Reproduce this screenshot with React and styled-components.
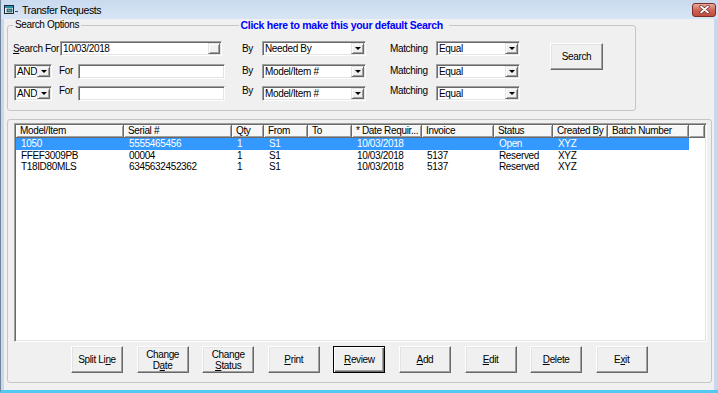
import React from 'react';
import styled, { createGlobalStyle, css } from 'styled-components';

const UI_FONT = `"Liberation Sans", Arial, sans-serif`;

const GlobalStyle = createGlobalStyle`
  body {
    margin: 0;
    background: #fff;
    font-family: ${UI_FONT};
    font-size: 10px;
    letter-spacing: -0.35px;
    color: #000;
  }
`;

const columns = [
  { title: 'Model/Item', w: 108 },
  { title: 'Serial #', w: 108 },
  { title: 'Qty', w: 32 },
  { title: 'From', w: 44 },
  { title: 'To', w: 44 },
  { title: '* Date Requir...', w: 70 },
  { title: 'Invoice', w: 72 },
  { title: 'Status', w: 59 },
  { title: 'Created By', w: 55 },
  { title: 'Batch Number', w: 81 },
];

const rows = [
  ['1050', '5555465456', '1', 'S1', '', '10/03/2018', '', 'Open', 'XYZ', ''],
  ['FFEF3009PB', '00004', '1', 'S1', '', '10/03/2018', '5137', 'Reserved', 'XYZ', ''],
  ['T18ID80MLS', '6345632452362', '1', 'S1', '', '10/03/2018', '5137', 'Reserved', 'XYZ', ''],
];

const Window = styled.div`
  width: 718px;
  height: 393px;
  box-sizing: border-box;
  display: flex;
  flex-direction: column;
  background: #c8d9ee;
  border-left: 1px solid #6f8399;
  border-bottom: 3px solid #52c8f2;
  overflow: hidden;
`;

const TitleBar = styled.div`
  height: 19px;
  flex: none;
  display: flex;
  align-items: center;
  padding: 0 2px 0 3px;
  background: linear-gradient(#c9daef, #d8e5f5);
`;

const TitleText = styled.span`
  flex: 1;
  margin-left: 2px;
  font-size: 10.5px;
  letter-spacing: -0.4px;
  color: #000;
`;

const CloseButton = styled.div`
  width: 24px;
  height: 14px;
  box-sizing: border-box;
  border: 1px solid #7a2e25;
  border-radius: 3px;
  background: linear-gradient(#e8aa9f, #d06656 50%, #c34a3b);
  display: flex;
  align-items: center;
  justify-content: center;
`;

const Client = styled.div`
  flex: 1;
  margin: 0 4px 0 3px;
  background: #f0f0f0;
  display: flex;
  flex-direction: column;
`;

const SearchGroup = styled.fieldset`
  margin: 0 0 0 3px;
  width: 629px;
  box-sizing: border-box;
  padding: 10px 5px 9px 5px;
  border: 1px solid #c6c6c6;
  border-radius: 3px;
  min-width: 0;
`;

const Legend = styled.legend`
  display: flex;
  align-items: center;
  width: 436px;
  padding: 0;
  line-height: 12px;
`;

const Caption = styled.span`
  padding: 0 2px;
  white-space: nowrap;
`;

const Rule = styled.span`
  flex: 1;
  height: 1px;
  background: #c6c6c6;
`;

const DefaultLink = styled.span`
  padding: 0 6px 0 2px;
  font-size: 10.5px;
  letter-spacing: -0.3px;
  font-weight: bold;
  color: #0000ff;
  white-space: nowrap;
  cursor: pointer;
`;

const SearchBody = styled.div`
  display: flex;
  align-items: flex-start;
`;

const Criteria = styled.div`
  display: grid;
  grid-template-columns: 229px 20px 104px 24px 46px 84px;
  grid-auto-rows: 15px;
  row-gap: 7.5px;
  align-items: center;
`;

const Lead = styled.div`
  display: flex;
  align-items: center;
  height: 100%;
`;

const Label = styled.span`
  white-space: nowrap;
  line-height: 12px;
  width: ${p => (p.$w ? `${p.$w}px` : 'auto')};
  margin-left: ${p => p.$ml || 0}px;
  margin-bottom: ${p => (p.$lift ? '5px' : '0')};
  flex: none;
`;

const Key = styled.span`
  text-decoration: underline;
  text-underline-offset: 1px;
`;

const Field = styled.div`
  box-sizing: border-box;
  height: 15px;
  width: ${p => p.$w}px;
  margin-left: ${p => p.$ml || 0}px;
  flex: none;
  padding: 1px;
  background: #fff;
  border: 1px solid;
  border-color: #a0a0a0 #fff #fff #a0a0a0;
  box-shadow: inset 1px 1px #696969, inset -1px -1px #e3e3e3;
  display: flex;
  align-items: stretch;
`;

const Value = styled.span`
  flex: 1;
  padding-left: 1px;
  line-height: 11px;
  white-space: nowrap;
  overflow: hidden;
`;

const raised = css`
  background: #f0f0f0;
  border: 1px solid;
  border-color: #e3e3e3 #696969 #696969 #e3e3e3;
  box-shadow: inset 1px 1px #fff, inset -1px -1px #a0a0a0;
`;

const PickButton = styled.span`
  width: 12px;
  flex: none;
  box-sizing: border-box;
  ${raised};
`;

const DropButton = styled.span`
  width: 13px;
  flex: none;
  box-sizing: border-box;
  ${raised};
  display: flex;
  align-items: center;
  justify-content: center;

  &::after {
    content: '';
    border-left: 3px solid transparent;
    border-right: 3px solid transparent;
    border-top: 3px solid #000;
  }
`;

const Button = styled.button`
  font-family: ${UI_FONT};
  font-size: 10px;
  letter-spacing: -0.35px;
  line-height: 11px;
  color: #000;
  width: ${p => p.$w || 52}px;
  height: 27px;
  padding: 0;
  flex: none;
  box-sizing: border-box;
  background: #f0f0f0;
  border: 1px solid;
  border-color: #fff #696969 #696969 #fff;
  box-shadow: inset -1px -1px #a0a0a0, inset 1px 1px #e3e3e3;
  cursor: pointer;

  ${p =>
    p.$default &&
    css`
      border-color: #000;
      box-shadow: inset 1px 1px #fff, inset -1px -1px #696969, inset -2px -2px #a0a0a0;
    `}
`;

const SearchButton = styled(Button)`
  margin: 2px 0 0 30px;
`;

const ListGroup = styled.div`
  margin: 8px 0 0 3px;
  width: 705px;
  height: 264px;
  box-sizing: border-box;
  border: 1px solid #c6c6c6;
  border-radius: 3px;
  padding: 3px 4px 9px 6px;
  display: flex;
  flex-direction: column;
`;

const ListView = styled.div`
  flex: 1;
  min-height: 0;
  box-sizing: border-box;
  background: #fff;
  border: 1px solid;
  border-color: #a0a0a0 #fff #fff #a0a0a0;
  box-shadow: inset 1px 1px #696969, inset -1px -1px #e3e3e3;
  padding: 1px;
  overflow: hidden;
`;

const HeaderRow = styled.div`
  display: flex;
  height: 13px;
`;

const HeaderCell = styled.div`
  box-sizing: border-box;
  width: ${p => (p.$w ? `${p.$w}px` : 'auto')};
  flex: ${p => (p.$w ? 'none' : '1')};
  padding-left: 4px;
  background: #f7f7f7;
  border-right: 1px solid #696969;
  border-bottom: 1px solid #696969;
  box-shadow: inset 1px 1px #fff, inset -1px -1px #a0a0a0;
  line-height: 12px;
  white-space: nowrap;
  overflow: hidden;
`;

const Row = styled.div`
  display: flex;
  width: max-content;
  height: 11.5px;
  background: ${p => (p.$selected ? '#3399ff' : 'transparent')};
  color: ${p => (p.$selected ? '#fff' : '#000')};
`;

const Cell = styled.div`
  box-sizing: border-box;
  width: ${p => p.$w}px;
  padding-left: 5px;
  line-height: 11.5px;
  white-space: nowrap;
  overflow: hidden;
`;

const ButtonBar = styled.div`
  display: flex;
  gap: 13.6px;
  margin-top: 4px;
  padding-left: 57px;
`;

const TitleIcon = () => (
  <svg width="16" height="12" viewBox="0 0 16 12">
    <rect x="0.5" y="1.5" width="9" height="8" fill="#e6f2f2" stroke="#1c2a36" />
    <rect x="1" y="2" width="8" height="2" fill="#2b8ea8" />
    <rect x="3" y="5" width="5" height="3" fill="#4aa3b4" stroke="#1c2a36" strokeWidth="0.6" />
    <path d="M11 7.5h3" stroke="#2d4a66" strokeWidth="1" />
  </svg>
);

const CloseGlyph = () => (
  <svg width="11" height="9" viewBox="0 0 11 9">
    <path d="M2 1.5 L9 7.5 M9 1.5 L2 7.5" stroke="#6b2c24" strokeWidth="3.2" strokeLinecap="round" />
    <path d="M2 1.5 L9 7.5 M9 1.5 L2 7.5" stroke="#ffffff" strokeWidth="1.7" strokeLinecap="round" />
  </svg>
);

const Combo = ({ value, w, ml }) => (
  <Field $w={w} $ml={ml}>
    <Value>{value}</Value>
    <DropButton />
  </Field>
);

const criteriaRows = [
  { by: 'Needed By' },
  { by: 'Model/Item #' },
  { by: 'Model/Item #', lift: true },
];

export default function App() {
  return (
    <>
      <GlobalStyle />
      <Window>
        <TitleBar>
          <TitleIcon />
          <TitleText>Transfer Requests</TitleText>
          <CloseButton>
            <CloseGlyph />
          </CloseButton>
        </TitleBar>
        <Client>
          <SearchGroup>
            <Legend>
              <Caption>Search Options</Caption>
              <Rule />
              <DefaultLink>Click here to make this your default Search</DefaultLink>
            </Legend>
            <SearchBody>
              <Criteria>
                {criteriaRows.map((r, i) => (
                  <React.Fragment key={i}>
                    {i === 0 ? (
                      <Lead>
                        <Label $w={47}>
                          <Key>S</Key>earch For
                        </Label>
                        <Field $w={162}>
                          <Value>10/03/2018</Value>
                          <PickButton />
                        </Field>
                      </Lead>
                    ) : (
                      <Lead>
                        <Combo value="AND" w={38} ml={1} />
                        <Label $w={19} $ml={7} $lift={r.lift}>
                          For
                        </Label>
                        <Field $w={147} />
                      </Lead>
                    )}
                    <Label $lift={r.lift}>By</Label>
                    <Combo value={r.by} w={104} />
                    <span />
                    <Label $lift={r.lift}>Matching</Label>
                    <Combo value="Equal" w={84} />
                  </React.Fragment>
                ))}
              </Criteria>
              <SearchButton $w={53}>Search</SearchButton>
            </SearchBody>
          </SearchGroup>

          <ListGroup>
            <ListView>
              <HeaderRow>
                {columns.map(c => (
                  <HeaderCell key={c.title} $w={c.w}>
                    {c.title}
                  </HeaderCell>
                ))}
                <HeaderCell />
              </HeaderRow>
              {rows.map((r, i) => (
                <Row key={i} $selected={i === 0}>
                  {r.map((v, j) => (
                    <Cell key={j} $w={columns[j].w}>
                      {v}
                    </Cell>
                  ))}
                </Row>
              ))}
            </ListView>
            <ButtonBar>
              <Button>
                Split Li<Key>n</Key>e
              </Button>
              <Button>
                Change
                <br />
                D<Key>a</Key>te
              </Button>
              <Button>
                Change
                <br />
                <Key>S</Key>tatus
              </Button>
              <Button>
                <Key>P</Key>rint
              </Button>
              <Button $default>
                <Key>R</Key>eview
              </Button>
              <Button>
                <Key>A</Key>dd
              </Button>
              <Button>
                <Key>E</Key>dit
              </Button>
              <Button>
                <Key>D</Key>elete
              </Button>
              <Button>
                E<Key>x</Key>it
              </Button>
            </ButtonBar>
          </ListGroup>
        </Client>
      </Window>
    </>
  );
}
